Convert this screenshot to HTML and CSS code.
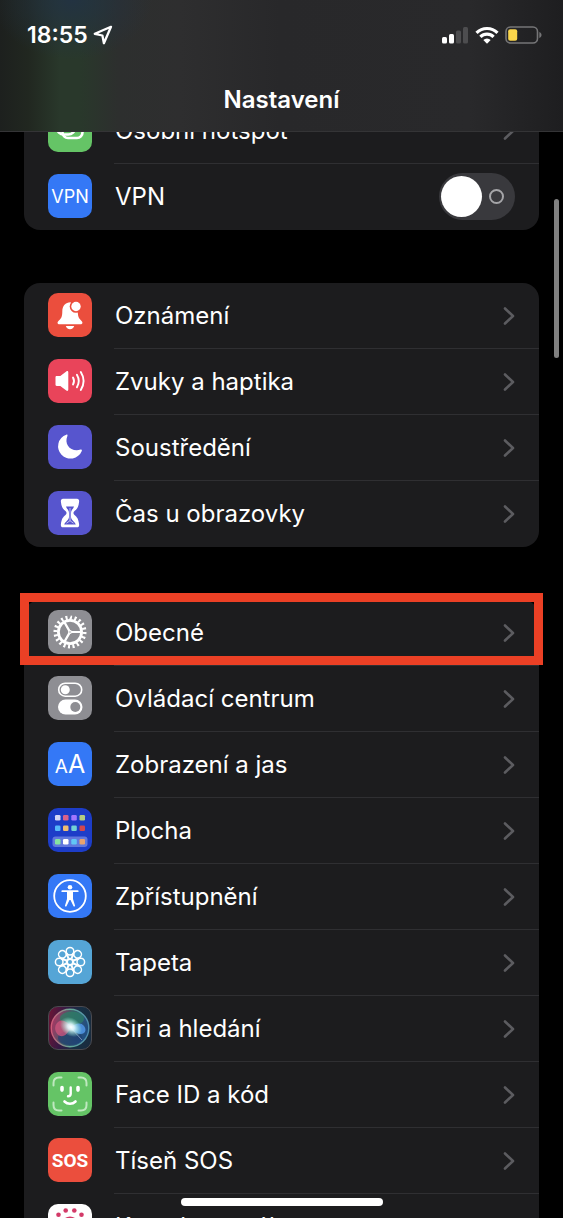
FILE: index.html
```html
<!DOCTYPE html>
<html lang="cs">
<head>
<meta charset="utf-8">
<meta name="viewport" content="width=device-width, initial-scale=1">
<title>Nastavení</title>
<link rel="stylesheet" href="styles.css">
</head>
<body>
<svg class="defs" aria-hidden="true">
  <symbol id="chevron" viewBox="0 0 12 18"><path d="M2 1.500 10 9l-8 7.500" fill="none" stroke="#5c5c60" stroke-width="2.600" stroke-linecap="round" stroke-linejoin="round"/></symbol>
</svg>
<div class="screen">
  <header class="header">
    <div class="status">
      <div class="status-left">
        <span class="time">18:55</span>
        <svg class="location" width="20" height="20" viewBox="0 0 20 20"><path d="M18 1.800 1.800 8.800l7.600 1.700 1.500 7.700z" fill="none" stroke="#fff" stroke-width="2.300" stroke-linejoin="round"/></svg>
      </div>
      <div class="status-right">
        <svg width="27" height="18" viewBox="0 0 27 18"><rect x="0" y="11" width="5" height="6.500" rx="1.500" fill="#fff"/><rect x="7" y="8" width="5" height="9.500" rx="1.500" fill="#fff"/><rect x="14" y="4.500" width="5" height="13" rx="1.500" fill="#4d4d4f"/><rect x="21" y="1" width="5" height="16.500" rx="1.500" fill="#4d4d4f"/></svg>
        <svg width="24" height="18" viewBox="0 0 24 18"><g fill="none" stroke="#fff" stroke-width="3.200"><path d="M1.500 6.800a15 15 0 0 1 21 0"/><path d="M5.400 10.900a9.400 9.400 0 0 1 13.200 0"/></g><path d="M12 17.800 8.300 14.100a5.300 5.300 0 0 1 7.400 0z" fill="#fff"/></svg>
        <svg width="37" height="18" viewBox="0 0 37 18"><rect x="1" y="1" width="31.500" height="16" rx="4.500" fill="none" stroke="#757577" stroke-width="1.600"/><rect x="3.200" y="3.200" width="9" height="11.600" rx="2" fill="#fbd64b"/><path d="M34.300 6v6c1.400-.6 2.200-1.700 2.200-3s-.8-2.400-2.200-3z" fill="#757577"/></svg>
      </div>
    </div>
    <h1 class="title">Nastavení</h1>
  </header>

  <main class="content">
    <div class="list">
      <section class="card">
        <a class="row" href="#hotspot">
          <span class="tile green"><svg viewBox="0 0 44 44"><g fill="none" stroke="#fff" stroke-width="2.600"><rect x="9" y="13" width="18" height="13.500" rx="6.700"/><rect x="14.500" y="19" width="20" height="11" rx="5.500"/></g></svg></span>
          <span class="body"><span class="label">Osobní hotspot</span><svg class="chevron"><use href="#chevron"/></svg></span>
        </a>
        <label class="row">
          <span class="tile blue vpn" aria-hidden="true">VPN</span>
          <span class="body"><span class="label">VPN</span><input class="switch" type="checkbox" role="switch"></span>
        </label>
      </section>

      <section class="card">
        <a class="row" href="#notifications">
          <span class="tile red"><svg viewBox="0 0 44 44"><path d="M22.500 9.200c-5 0-8.200 3.800-8.200 9 0 5.300-.8 6.800-3.400 9.300-2.200 2-1.500 3.800.6 3.800h21c2.100 0 2.800-1.800.6-3.800-2.400-2.300-3.200-3.900-3.300-8.900z" fill="#fff"/><path d="M17.800 33h8.400c-.5 2-2 3.200-4.200 3.200s-3.700-1.200-4.200-3.200z" fill="#fff"/><circle cx="28" cy="13.500" r="6.300" fill="#eb4e3d"/><circle cx="28" cy="13.500" r="4.700" fill="#fff"/></svg></span>
          <span class="body"><span class="label">Oznámení</span><svg class="chevron"><use href="#chevron"/></svg></span>
        </a>
        <a class="row" href="#sounds">
          <span class="tile pink"><svg viewBox="0 0 44 44"><path d="M7.500 18.300c0-.7.500-1.200 1.200-1.200h3.600l6-4.600c1-.8 2-.3 2 .9v17.200c0 1.200-1 1.700-2 .9l-6-4.600H8.700c-.7 0-1.200-.5-1.200-1.200z" fill="#fff"/><g fill="none" stroke="#fff" stroke-width="1.900" stroke-linecap="round"><path d="M25 18.500a7 7 0 0 1 0 7"/><path d="M28.900 15.800a12 12 0 0 1 0 12.400"/><path d="M32.800 13a17 17 0 0 1 0 18"/></g></svg></span>
          <span class="body"><span class="label">Zvuky a haptika</span><svg class="chevron"><use href="#chevron"/></svg></span>
        </a>
        <a class="row" href="#focus">
          <span class="tile indigo"><svg viewBox="0 0 44 44"><path d="M18.300 9.700c.8-.3 1.500.3 1.100 1.200-3.600 8.400 3.300 16.400 13.200 13.700.9-.2 1.600.4 1.200 1.300A12.300 12.300 0 1 1 18.300 9.700z" fill="#fff"/></svg></span>
          <span class="body"><span class="label">Soustředění</span><svg class="chevron"><use href="#chevron"/></svg></span>
        </a>
        <a class="row" href="#screen-time">
          <span class="tile indigo"><svg viewBox="0 0 44 44"><path d="M15 7.700h14c1.700 0 2.300 1.300 2.100 3-.5 5.300-2.200 7.400-4.600 9.300-1.400 1.200-1.400 2.800 0 4 2.400 1.900 4.100 4 4.600 9.300.2 1.700-.4 3-2.100 3H15c-1.700 0-2.300-1.300-2.100-3 .5-5.300 2.200-7.400 4.600-9.300 1.400-1.200 1.400-2.800 0-4-2.400-1.900-4.100-4-4.600-9.300-.2-1.700.4-3 2.100-3z" fill="#fff"/><path d="M18 15.500h8c-.8 2.600-3 3.500-3 6.500v4c0 3.200 3.800 4.500 4.800 7.500H16.200c1-3 4.800-4.300 4.800-7.500v-4c0-3-2.200-3.900-3-6.500z" fill="#5755ce"/><path d="M22 17v13M18.500 32.200l3.500-2.500 3.500 2.500" stroke="#bdbbf0" stroke-width="1" fill="none"/></svg></span>
          <span class="body"><span class="label">Čas u obrazovky</span><svg class="chevron"><use href="#chevron"/></svg></span>
        </a>
      </section>

      <section class="card">
        <a class="row highlighted" href="#general">
          <span class="tile gray"><svg viewBox="0 0 44 44"><g fill="none" stroke="#fff"><circle cx="22" cy="22" r="11.600" stroke-width="2.800"/><circle cx="22" cy="22" r="14.500" stroke-width="4" pathLength="40" stroke-dasharray="0.900 1.100"/><path d="M23 22h10M21.500 21.100l-5-8.700M21.500 22.900l-5 8.700" stroke-width="2.200"/><circle cx="22" cy="22" r="1.300" fill="#8e8e93" stroke-width="1.200"/></g></svg></span>
          <span class="body"><span class="label">Obecné</span><svg class="chevron"><use href="#chevron"/></svg></span>
        </a>
        <a class="row" href="#control-center">
          <span class="tile gray"><svg viewBox="0 0 44 44"><rect x="10.700" y="7.200" width="23" height="13" rx="6.500" fill="none" stroke="#fff" stroke-width="1.600"/><circle cx="17.300" cy="13.700" r="4.500" fill="#fff"/><rect x="10" y="23.500" width="24.500" height="15" rx="7.500" fill="#fff"/><circle cx="27.300" cy="31" r="5" fill="#8e8e93"/></svg></span>
          <span class="body"><span class="label">Ovládací centrum</span><svg class="chevron"><use href="#chevron"/></svg></span>
        </a>
        <a class="row" href="#display">
          <span class="tile blue letters" aria-hidden="true"><span class="small-a">A</span><span class="large-a">A</span></span>
          <span class="body"><span class="label">Zobrazení a jas</span><svg class="chevron"><use href="#chevron"/></svg></span>
        </a>
        <a class="row" href="#home-screen">
          <span class="tile navy"><svg viewBox="0 0 44 44"><rect x="4.500" y="28.500" width="35" height="10.500" rx="3" fill="#6178dd"/><g><rect x="7" y="7" width="5.500" height="5.500" rx="1.300" fill="#d5d6f5"/><rect x="15" y="7" width="5.500" height="5.500" rx="1.300" fill="#da618a"/><rect x="23.300" y="7" width="5.500" height="5.500" rx="1.300" fill="#a276ff"/><rect x="31.500" y="7" width="5.500" height="5.500" rx="1.300" fill="#b6ce82"/><rect x="7" y="17.500" width="5.500" height="5.500" rx="1.300" fill="#55b9fa"/><rect x="15" y="17.500" width="5.500" height="5.500" rx="1.300" fill="#f1bd72"/><rect x="23.300" y="17.500" width="5.500" height="5.500" rx="1.300" fill="#73d2d6"/><rect x="31.500" y="17.500" width="5.500" height="5.500" rx="1.300" fill="#d3474f"/><rect x="7" y="31" width="5.500" height="5.500" rx="1.300" fill="#85e5a0"/><rect x="15" y="31" width="5.500" height="5.500" rx="1.300" fill="#fff"/><rect x="23.300" y="31" width="5.500" height="5.500" rx="1.300" fill="#61c6f6"/><rect x="31.500" y="31" width="5.500" height="5.500" rx="1.300" fill="#eaa36d"/></g></svg></span>
          <span class="body"><span class="label">Plocha</span><svg class="chevron"><use href="#chevron"/></svg></span>
        </a>
        <a class="row" href="#accessibility">
          <span class="tile blue"><svg viewBox="0 0 44 44"><circle cx="22" cy="22" r="15.800" fill="none" stroke="#fff" stroke-width="1.800"/><circle cx="22" cy="13.300" r="2.300" fill="#fff"/><path d="M14.300 17.200h15.400" stroke="#fff" stroke-width="1.800" stroke-linecap="round"/><path d="M19 17h6v8l2 6.500c.3 1.200-1.200 1.500-1.600.5L22.500 26h-1l-2.900 6c-.4 1-1.900.7-1.600-.5l2-6.500z" fill="#fff"/></svg></span>
          <span class="body"><span class="label">Zpřístupnění</span><svg class="chevron"><use href="#chevron"/></svg></span>
        </a>
        <a class="row" href="#wallpaper">
          <span class="tile sky"><svg viewBox="0 0 44 44"><defs><g id="petal"><circle cx="22" cy="11.200" r="3.800"/><path d="M22 19.200c-2.600-2.300-4.600-4.300-3.500-6.300M22 19.200c2.600-2.300 4.600-4.300 3.500-6.300"/></g></defs><g fill="none" stroke="#fff" stroke-width="1.500"><use href="#petal"/><use href="#petal" transform="rotate(45 22 22)"/><use href="#petal" transform="rotate(90 22 22)"/><use href="#petal" transform="rotate(135 22 22)"/><use href="#petal" transform="rotate(180 22 22)"/><use href="#petal" transform="rotate(225 22 22)"/><use href="#petal" transform="rotate(270 22 22)"/><use href="#petal" transform="rotate(315 22 22)"/><circle cx="22" cy="22" r="2.800"/></g></svg></span>
          <span class="body"><span class="label">Tapeta</span><svg class="chevron"><use href="#chevron"/></svg></span>
        </a>
        <a class="row" href="#siri">
          <span class="tile siri"><svg viewBox="0 0 44 44"><defs><radialGradient id="glow"><stop offset="0" stop-color="#fff"/><stop offset=".3" stop-color="#e4fbff" stop-opacity=".9"/><stop offset="1" stop-color="#9fd" stop-opacity="0"/></radialGradient><linearGradient id="orb" x1="0" y1=".3" x2="1" y2=".6"><stop offset="0" stop-color="#b03362"/><stop offset=".45" stop-color="#3d5c68"/><stop offset="1" stop-color="#1d4b84"/></linearGradient><linearGradient id="rim"><stop offset="0" stop-color="#e0647f"/><stop offset=".5" stop-color="#6fc3a4"/><stop offset="1" stop-color="#5b9cba"/></linearGradient></defs><circle cx="22" cy="22" r="19" fill="url(#orb)"/><ellipse cx="24" cy="12.500" rx="12" ry="7" fill="#2b8067" opacity=".7"/><ellipse cx="22" cy="32" rx="12" ry="7" fill="#1b3a72" opacity=".6"/><path d="M23 21c-4-6-9-8-13-5-5 4-3 12 2 14 5 1 8-3 11-9z" fill="#d4547d" opacity=".75"/><path d="M22 22c5-5 11-6 14-2s1 8-3 8-7-2-11-6z" fill="#5197e6" opacity=".85"/><path d="m22 21 12 13" stroke="#9ab0ce" stroke-width="1" opacity=".7"/><circle cx="22" cy="22" r="18.800" fill="none" stroke="url(#rim)" stroke-width="1.400" opacity=".8"/><ellipse cx="23" cy="21" rx="12" ry="9" fill="url(#glow)" transform="rotate(35 23 21)"/></svg></span>
          <span class="body"><span class="label">Siri a hledání</span><svg class="chevron"><use href="#chevron"/></svg></span>
        </a>
        <a class="row" href="#face-id">
          <span class="tile green"><svg viewBox="0 0 44 44"><g fill="none" stroke="#bfe8bf" stroke-width="2" stroke-linecap="round"><path d="M5.500 13.500V11c0-3.500 2-5.500 5.500-5.500h2.500M30.500 5.500H33c3.500 0 5.500 2 5.500 5.500v2.500M38.500 30.500V33c0 3.500-2 5.500-5.500 5.500h-2.500M13.500 38.500H11c-3.500 0-5.500-2-5.500-5.500v-2.500"/></g><g fill="none" stroke="#fff" stroke-linecap="round"><path d="M14 15.500v2.600M30 15.500v2.600" stroke-width="3.600"/><path d="M22.700 15.500v6.300c0 1.800-.8 2.500-2.700 2.500" stroke-width="2.400"/><path d="M16.500 29.500c3 3 8 3 11 0" stroke-width="2.600"/></g></svg></span>
          <span class="body"><span class="label">Face ID a kód</span><svg class="chevron"><use href="#chevron"/></svg></span>
        </a>
        <a class="row" href="#sos">
          <span class="tile red sos" aria-hidden="true">SOS</span>
          <span class="body"><span class="label">Tíseň SOS</span><svg class="chevron"><use href="#chevron"/></svg></span>
        </a>
        <a class="row" href="#exposure">
          <span class="tile white"><svg viewBox="0 0 44 44"><g fill="#d33a68"><circle cx="17.700" cy="6.500" r="2.300"/><circle cx="26.300" cy="6.500" r="2.300"/><circle cx="10.500" cy="10.700" r="2.300"/><circle cx="33.500" cy="10.700" r="2.300"/><circle cx="6.500" cy="18" r="2.300"/><circle cx="37.500" cy="18" r="2.300"/><circle cx="22" cy="21.500" r="9"/></g></svg></span>
          <span class="body"><span class="label">Kontakty s nákazou</span><svg class="chevron"><use href="#chevron"/></svg></span>
        </a>
      </section>
    </div>
  </main>
  <div class="scrollbar"></div>
  <div class="home-indicator"></div>
</div>
</body>
</html>
```
FILE: styles.css
```css
*,
*::before,
*::after {
  box-sizing: border-box;
}

body {
  margin: 0;
  background: #000;
  color: #fff;
  font-family: Inter, "Liberation Sans", sans-serif;
}

.defs {
  position: absolute;
  width: 0;
  height: 0;
}

.screen {
  position: relative;
  display: flex;
  flex-direction: column;
  height: 100vh;
  overflow: hidden;
}

.header {
  flex: none;
  display: flex;
  flex-direction: column;
  height: 132px;
  border-bottom: 1px solid #343436;
  background:
    radial-gradient(ellipse 80px 60px at 72px 0, rgba(34, 50, 68, 0.9), rgba(34, 50, 68, 0)),
    linear-gradient(to right, #1d201e 0, #212720 28px, #29382b 60px, #29382b 80px, #2d2f2e 118px, #2e2e2f 180px, #28282a 280px, #29292b 470px, #1e1e20 563px);
}

.status {
  display: flex;
  justify-content: space-between;
  align-items: center;
  height: 70px;
  padding: 0 21px 0 27px;
}

.status-left,
.status-right {
  display: flex;
  align-items: center;
}

.status-left {
  gap: 5px;
}

.status-right {
  gap: 6px;
}

.time {
  font-size: 23px;
  line-height: 28px;
  font-weight: 600;
}

.title {
  margin: 16px 0 0;
  font-size: 24px;
  line-height: 28px;
  font-weight: 600;
  text-align: center;
}

.content {
  flex: 1;
  min-height: 0;
  overflow: hidden;
}

.list {
  display: flex;
  flex-direction: column;
  gap: 53px;
  margin-top: -34px;
  padding: 0 24px;
}

.card {
  border-radius: 16px;
  background: #1c1c1e;
}

.row {
  position: relative;
  display: flex;
  align-items: center;
  gap: 22px;
  height: 66px;
  padding-left: 24px;
  color: inherit;
  text-decoration: none;
}

.body {
  flex: 1;
  display: flex;
  align-items: center;
  justify-content: space-between;
  height: 66px;
  padding-right: 24px;
  border-bottom: 1px solid #2f2f32;
}

.row:last-child .body {
  border-bottom-color: transparent;
}

.label {
  padding-left: 1px;
  font-size: 24px;
  line-height: 32px;
}

.chevron {
  flex: none;
  width: 12px;
  height: 18px;
}

.highlighted::after {
  content: "";
  position: absolute;
  inset: -7px -4px 1px;
  border: 9px solid #eb4025;
}

.tile {
  flex: none;
  display: flex;
  align-items: center;
  justify-content: center;
  width: 44px;
  height: 44px;
  margin-bottom: 2px;
  border-radius: 10px;
  overflow: hidden;
}

.tile svg {
  flex: none;
  width: 44px;
  height: 44px;
}

.green { background: #65c466; }
.blue { background: #3478f6; }
.red { background: #eb4e3d; }
.pink { background: #e9445a; }
.indigo { background: #5755ce; }
.gray { background: #8e8e93; }
.navy { background: #1d3dc8; }
.sky { background: #55a5d6; }
.white { background: #fff; }

.siri {
  border: 1px solid #4a4a50;
  background: linear-gradient(100deg, #6e1535 0, #351944 35%, #173044 65%, #1a2b3d 100%);
}

.vpn {
  font-size: 18px;
}

.letters {
  align-items: baseline;
  line-height: 44px;
}

.small-a {
  font-size: 19px;
}

.large-a {
  font-size: 25px;
}

.sos {
  font-family: Roboto, sans-serif;
  font-size: 19px;
  font-weight: 700;
}

.switch {
  appearance: none;
  display: flex;
  align-items: center;
  justify-content: space-between;
  width: 76px;
  height: 47px;
  margin: 0;
  padding: 0 11px 0 2px;
  border-radius: 24px;
  background: #39393d;
}

.switch::before {
  content: "";
  width: 41px;
  height: 41px;
  border-radius: 50%;
  background: #fff;
}

.switch::after {
  content: "";
  width: 15px;
  height: 15px;
  border: 2px solid #a5a5a8;
  border-radius: 50%;
}

.scrollbar {
  position: absolute;
  top: 199px;
  right: 4px;
  width: 5px;
  height: 159px;
  border-radius: 3px;
  background: #808080;
}

.home-indicator {
  position: absolute;
  bottom: 12px;
  left: 50%;
  width: 202px;
  height: 8px;
  margin-left: -101px;
  border-radius: 4px;
  background: #fff;
}
```
